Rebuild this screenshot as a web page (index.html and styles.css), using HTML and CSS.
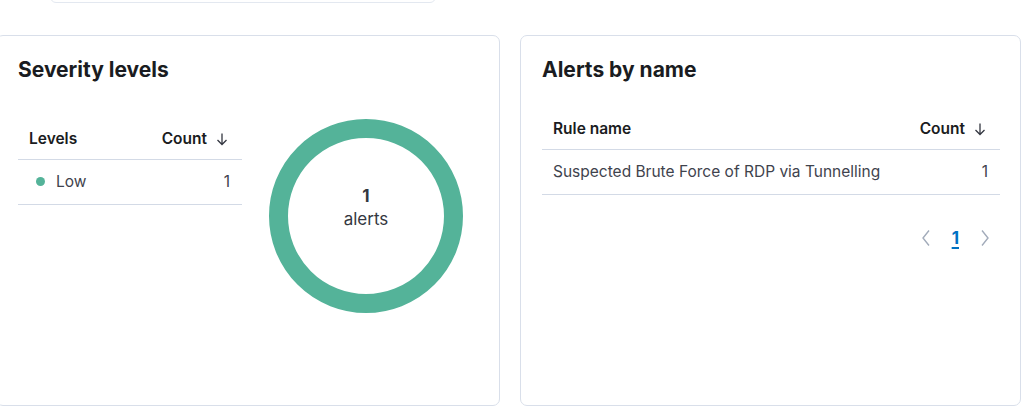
FILE: index.html
```html
<!DOCTYPE html>
<html lang="en">
<head>
  <meta charset="UTF-8">
  <title>Alerts overview</title>
  <link rel="stylesheet" href="styles.css">
</head>
<body>
  <div class="page">

    <div class="searchbar"></div>

    <div class="panels">
      <section class="panel">
        <h2 class="panel_title">Severity levels</h2>
        <div class="severity_body">
          <table class="tbl levels">
            <thead>
              <tr>
                <th>Levels</th>
                <th class="num">
                  <span class="sort">Count
                    <svg viewBox="0 0 16 16" width="16" height="16"><path d="M8 2.5v11M3.5 9l4.5 4.5L12.5 9"/></svg>
                  </span>
                </th>
              </tr>
            </thead>
            <tbody>
              <tr>
                <td><span class="dot"></span>Low</td>
                <td class="num">1</td>
              </tr>
            </tbody>
          </table>
          <div class="donut">
            <strong>1</strong>
            <span>alerts</span>
          </div>
        </div>
      </section>

      <section class="panel">
        <h2 class="panel_title">Alerts by name</h2>
        <table class="tbl rules">
          <thead>
            <tr>
              <th>Rule name</th>
              <th class="num">
                <span class="sort">Count
                  <svg viewBox="0 0 16 16" width="16" height="16"><path d="M8 2.5v11M3.5 9l4.5 4.5L12.5 9"/></svg>
                </span>
              </th>
            </tr>
          </thead>
          <tbody>
            <tr>
              <td>Suspected Brute Force of RDP via Tunnelling</td>
              <td class="num">1</td>
            </tr>
          </tbody>
        </table>
        <nav class="pager">
          <svg class="chev" viewBox="0 0 12 18" width="12" height="18"><path d="M9 1.5 3 9l6 7.5"/></svg>
          <a class="page_num">1</a>
          <svg class="chev" viewBox="0 0 12 18" width="12" height="18"><path d="M3 1.5 9 9l-6 7.5"/></svg>
        </nav>
      </section>
    </div>

  </div>
</body>
</html>
```

FILE: styles.css
```css
body{
  margin: 0;
  padding: 0;
  background: #fff;
  font-family: Inter, "Noto Sans", sans-serif;
  color: #343741;
  overflow: hidden;
}
.page{
  display: flex;
  flex-direction: column;
}
.searchbar{
  width: 386px;
  height: 40px;
  margin: -37px 0 0 50px;
  box-sizing: border-box;
  border: 1px solid #e3e8f0;
  border-radius: 6px;
}
.panels{
  display: grid;
  grid-template-columns: 504px 501px;
  gap: 20px;
  margin: 32px 0 0 -4px;
}
.panel{
  height: 371px;
  box-sizing: border-box;
  padding: 21px;
  border: 1px solid #d9dfea;
  border-radius: 7px;
}
.panel_title{
  margin: 0 0 26px;
  font-size: 21px;
  line-height: 25px;
  font-weight: 700;
  color: #1a1c21;
}
.tbl{
  border-collapse: collapse;
  font-size: 15.5px;
  line-height: 21px;
}
.tbl th{
  padding: 10px 11px;
  text-align: left;
  font-weight: 600;
  color: #1a1c21;
  border-bottom: 1px solid #d3dae6;
}
.tbl td{
  padding: 11px 11px 12px;
  border-bottom: 1px solid #d3dae6;
  color: #3f434d;
}
.tbl .num{
  text-align: right;
  padding-right: 12px;
}
.sort{
  display: inline-flex;
  align-items: center;
  gap: 7px;
}
.sort svg{
  fill: none;
  stroke: #343741;
  stroke-width: 1.3;
}
.severity_body{
  display: flex;
  align-items: flex-start;
}
.levels{
  width: 224px;
  margin-top: 10px;
}
.dot{
  display: inline-block;
  width: 9px;
  height: 9px;
  border-radius: 50%;
  background: #54b399;
  margin: 0 11px 1px 7px;
}
.donut{
  width: 194px;
  height: 194px;
  box-sizing: border-box;
  margin: 11px 0 0 27px;
  border: 19px solid #54b399;
  border-radius: 50%;
  display: flex;
  flex-direction: column;
  align-items: center;
  justify-content: center;
  padding-bottom: 16px;
  font-size: 17px;
  line-height: 23px;
  color: #343741;
}
.donut strong{
  font-weight: 700;
}
.rules{
  width: 458px;
}
.pager{
  display: flex;
  justify-content: flex-end;
  align-items: center;
  gap: 20px;
  margin-top: 31px;
  padding-right: 8px;
  height: 24px;
}
.chev{
  fill: none;
  stroke: #a2abba;
  stroke-width: 1.4;
}
.page_num{
  color: #0071c2;
  font-size: 17px;
  font-weight: 700;
  text-decoration: underline;
  text-decoration-thickness: 2px;
  text-underline-offset: 3px;
}
```
